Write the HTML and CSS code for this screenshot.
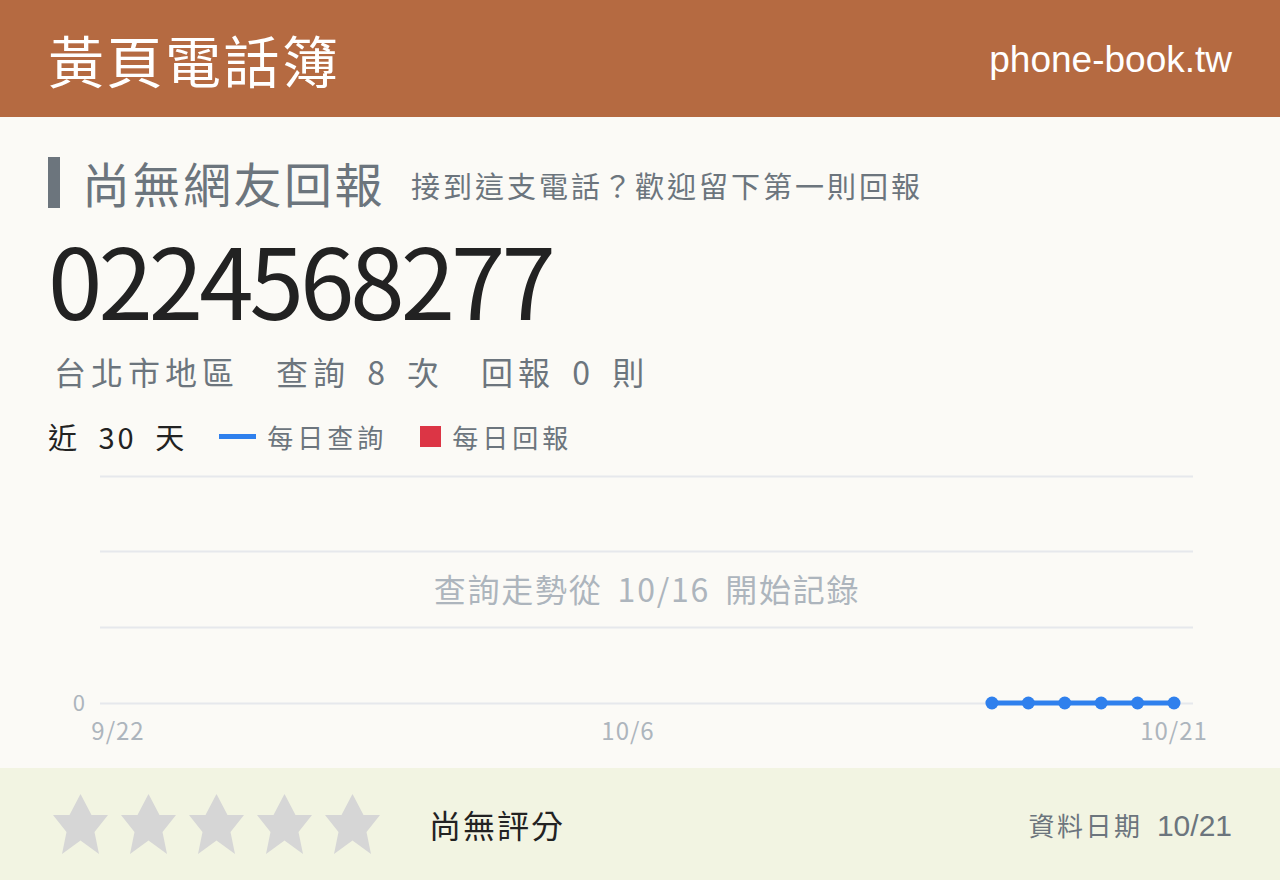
FILE: index.html
```html
<!DOCTYPE html>
<html lang="zh-Hant">
<head>
    <meta charset="UTF-8">
    <meta name="viewport" content="width=device-width, initial-scale=1.0">
    <title>0224568277 - 黃頁電話簿</title>
    <link rel="stylesheet" href="styles.css">
</head>
<body>
    <header class="site-header">
        <h1 class="brand">黃頁電話簿</h1>
        <span class="domain">phone-book.tw</span>
    </header>

    <main class="content">
        <div class="report-title">
            <h2>尚無網友回報</h2>
            <span class="report-hint">接到這支電話？歡迎留下第一則回報</span>
        </div>

        <div class="phone-number">0224568277</div>

        <div class="stats">台北市地區　查詢 8 次　回報 0 則</div>

        <div class="legend">
            <span class="legend-range">近 30 天</span>
            <span class="legend-item"><i class="swatch-line"></i>每日查詢</span>
            <span class="legend-item"><i class="swatch-box"></i>每日回報</span>
        </div>

        <div class="chart">
            <svg id="trend" width="1184" height="308" viewBox="0 0 1184 308">
                <g class="grid">
                    <line x1="52" y1="16.5" x2="1145" y2="16.5"></line>
                    <line x1="52" y1="91.5" x2="1145" y2="91.5"></line>
                    <line x1="52" y1="167.5" x2="1145" y2="167.5"></line>
                    <line x1="52" y1="243.5" x2="1145" y2="243.5"></line>
                </g>
                <text class="axis-y" x="37" y="251" text-anchor="end">0</text>
                <text class="axis-x" x="70" y="280" text-anchor="middle">9/22</text>
                <text class="axis-x" x="580" y="280" text-anchor="middle">10/6</text>
                <text class="axis-x" x="1126" y="280" text-anchor="middle">10/21</text>
                <text class="chart-note" x="599" y="142" text-anchor="middle">查詢走勢從 10/16 開始記錄</text>
                <g id="series"></g>
            </svg>
        </div>
    </main>

    <footer class="rating-bar">
        <div class="stars">
            <svg class="star" viewBox="0 0 55 60"><polygon points="27.5,0 38.5,21 55,21 41.5,38 46,60 27.5,46.5 9,60 13.5,38 0,21 16.5,21"/></svg>
            <svg class="star" viewBox="0 0 55 60"><polygon points="27.5,0 38.5,21 55,21 41.5,38 46,60 27.5,46.5 9,60 13.5,38 0,21 16.5,21"/></svg>
            <svg class="star" viewBox="0 0 55 60"><polygon points="27.5,0 38.5,21 55,21 41.5,38 46,60 27.5,46.5 9,60 13.5,38 0,21 16.5,21"/></svg>
            <svg class="star" viewBox="0 0 55 60"><polygon points="27.5,0 38.5,21 55,21 41.5,38 46,60 27.5,46.5 9,60 13.5,38 0,21 16.5,21"/></svg>
            <svg class="star" viewBox="0 0 55 60"><polygon points="27.5,0 38.5,21 55,21 41.5,38 46,60 27.5,46.5 9,60 13.5,38 0,21 16.5,21"/></svg>
        </div>
        <span class="rating-text">尚無評分</span>
        <span class="data-date">資料日期 <b>10/21</b></span>
    </footer>

    <script>
        // daily lookups for the last 30 days, records start on 10/16
        const days = 30;
        const lookups = [0, 0, 0, 0, 0, 0];
        const left = 70, right = 1126, baseY = 243;
        const step = (right - left) / (days - 1);
        const series = document.getElementById('series');
        const ns = 'http://www.w3.org/2000/svg';

        const start = days - lookups.length;
        const pts = lookups.map((v, i) => [left + (start + i) * step, baseY - v * 75.5]);

        const line = document.createElementNS(ns, 'polyline');
        line.setAttribute('points', pts.map(p => p.join(',')).join(' '));
        line.setAttribute('class', 'series-line');
        series.appendChild(line);

        pts.forEach(p => {
            const dot = document.createElementNS(ns, 'circle');
            dot.setAttribute('cx', p[0]);
            dot.setAttribute('cy', p[1]);
            dot.setAttribute('r', 6.5);
            dot.setAttribute('class', 'series-dot');
            series.appendChild(dot);
        });
    </script>
</body>
</html>
```

FILE: styles.css
```css
body {
    margin: 0;
    padding: 0;
    background-color: #fbfaf6;
    color: #222;
    font-family: "Noto Sans CJK TC", "Noto Sans", sans-serif;
}
.site-header {
    height: 117px;
    box-sizing: border-box;
    padding: 0 48px;
    background-color: #b56a41;
    color: #fff;
    display: flex;
    align-items: center;
    justify-content: space-between;
}
.brand {
    margin: 0;
    font-size: 56px;
    font-weight: normal;
    letter-spacing: 2.5px;
    line-height: 1;
}
.domain {
    font-family: "Liberation Sans", Arial, sans-serif;
    font-size: 37px;
    padding-top: 2px;
}
.content {
    padding: 40px 48px 0;
}
.report-title {
    display: flex;
    align-items: center;
    height: 51px;
    border-left: 12px solid #6c757d;
    padding-left: 22px;
    color: #6c757d;
}
.report-title h2 {
    margin: 0;
    font-size: 48px;
    font-weight: normal;
    letter-spacing: 2.5px;
    line-height: 51px;
}
.report-hint {
    margin-left: 26px;
    margin-top: 4px;
    font-size: 29px;
    line-height: 40px;
    letter-spacing: 3px;
}
.phone-number {
    margin-top: 20px;
    font-size: 98px;
    line-height: 1;
    letter-spacing: -4px;
    color: #222;
}
.stats {
    margin-top: 29px;
    padding-left: 6px;
    font-size: 32px;
    line-height: 1;
    letter-spacing: 5px;
    word-spacing: 5px;
    color: #6c757d;
}
.legend {
    margin-top: 34px;
    display: flex;
    align-items: center;
    height: 30px;
}
.legend-range {
    font-size: 29px;
    letter-spacing: 3px;
    word-spacing: 9px;
    color: #222;
    margin-right: 32px;
}
.legend-item {
    display: flex;
    align-items: center;
    font-size: 26px;
    letter-spacing: 4px;
    color: #6c757d;
    margin-right: 33px;
}
.swatch-line {
    width: 37px;
    height: 5px;
    background-color: #2f80ed;
    margin-right: 11px;
}
.swatch-box {
    width: 21px;
    height: 21px;
    background-color: #dc3545;
    margin-right: 11px;
}
.chart {
    margin-top: 9px;
    height: 308px;
}
.chart svg {
    display: block;
}
.grid line {
    stroke: #e6e8ec;
    stroke-width: 2;
}
.axis-y {
    fill: #adb5bd;
    font-size: 22px;
}
.axis-x {
    fill: #adb5bd;
    font-size: 24px;
    letter-spacing: 1px;
}
.chart-note {
    fill: #adb5bd;
    font-size: 32px;
    letter-spacing: 1.8px;
    word-spacing: 6px;
}
.series-line {
    fill: none;
    stroke: #2f80ed;
    stroke-width: 5;
}
.series-dot {
    fill: #2f80ed;
}
.rating-bar {
    height: 112px;
    box-sizing: border-box;
    padding: 0 48px 0 53px;
    background-color: #f2f4e2;
    display: flex;
    align-items: center;
}
.stars {
    display: flex;
    gap: 13px;
}
.star {
    width: 55px;
    height: 60px;
    fill: #d6d6d6;
}
.rating-text {
    margin-left: 49px;
    font-size: 32px;
    letter-spacing: 2px;
    color: #222;
}
.data-date {
    margin-left: auto;
    font-size: 26px;
    letter-spacing: 2.5px;
    color: #6c757d;
}
.data-date b {
    font-weight: normal;
    font-family: "Liberation Sans", Arial, sans-serif;
    font-size: 30px;
    letter-spacing: 0;
    margin-left: 6px;
}
```
